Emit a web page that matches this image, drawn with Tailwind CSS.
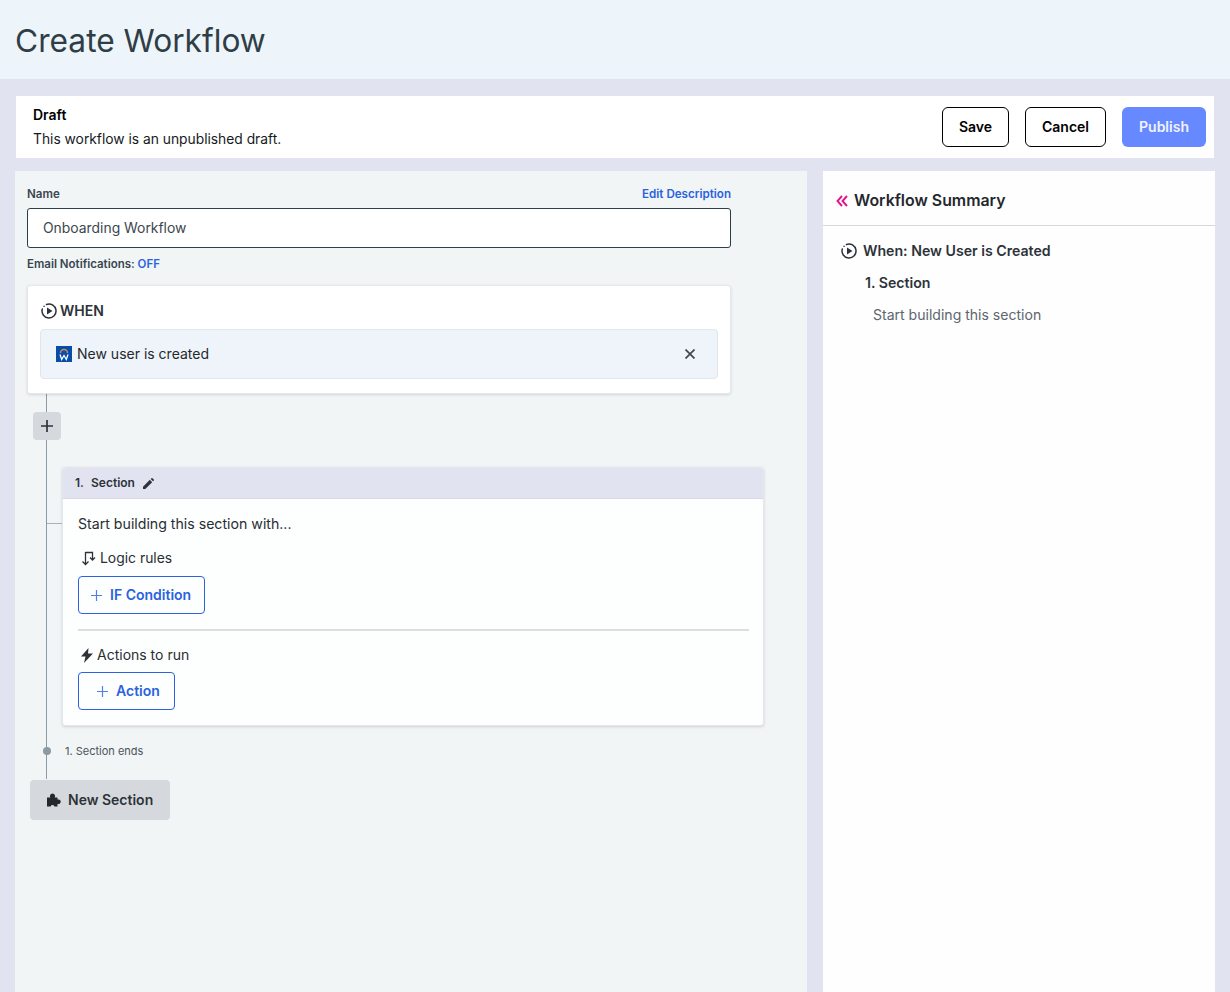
<!DOCTYPE html>
<html lang="en">
<head>
  <meta charset="UTF-8" />
  <title>Create Workflow</title>
  <script src="https://cdn.jsdelivr.net/npm/@tailwindcss/browser@4"></script>
</head>
<body class="bg-[#e1e3f0] font-['Inter',sans-serif] text-[#2a2e33] h-[992px] overflow-hidden">
  <!-- Header -->
  <header class="h-[79px] bg-[#eef5fa] pl-[15px] pt-[2px] flex items-center">
    <h1 class="text-[31.7px] leading-none text-[#2f3e46] font-normal">Create Workflow</h1>
  </header>

  <!-- Draft bar -->
  <div class="mt-[17px] ml-4 w-[1198px] h-[62px] bg-white pl-[17px] pr-2 flex items-center justify-between">
    <div class="-mt-px">
      <div class="text-sm leading-5 font-semibold text-black">Draft</div>
      <div class="text-[13.8px] leading-5 mt-1 text-[#16191c]">This workflow is an unpublished draft.</div>
    </div>
    <div class="flex gap-4">
      <button class="h-10 w-[67px] rounded-md border border-black bg-white text-sm font-semibold text-black">Save</button>
      <button class="h-10 w-[81px] rounded-md border border-black bg-white text-sm font-semibold text-black">Cancel</button>
      <button class="h-10 w-[84px] rounded-md bg-[#6789ff] text-sm font-semibold text-white/90">Publish</button>
    </div>
  </div>

  <main class="mt-[13px] ml-[15px] flex gap-4 h-[821px]">
    <!-- Builder -->
    <section class="w-[792px] bg-[#f1f5f6] pl-3 pt-4">
      <div class="w-[704px] flex justify-between items-center h-4 text-[11.6px] font-semibold">
        <span class="text-[#3a4650]">Name</span>
        <span class="text-[#2a62e0]">Edit Description</span>
      </div>
      <div class="w-[704px] h-10 mt-[5px] bg-white border border-[#2f3e46] rounded-[3px] flex items-center pl-[15px] text-[13.9px] text-[#3d464d]">Onboarding Workflow</div>
      <div class="mt-2 h-4 text-[11.5px] font-semibold text-[#3a4650]">Email Notifications: <span class="text-[#2a62e0]">OFF</span></div>

      <div class="relative mt-[14px]">
        <!-- timeline line -->
        <div class="absolute left-[19px] top-[100px] w-px h-[394px] bg-[#8b9aa3]"></div>

        <!-- When card -->
        <div class="relative -mt-px w-[704px] h-[109px] bg-white rounded-[3px] border border-[#e4e7ec] shadow-[0_1px_3px_rgba(0,0,0,0.12)] px-3 pt-[15px]">
          <div class="flex items-center gap-[3px] h-5 text-sm font-semibold text-[#2d3338]">
            <svg class="w-4 h-4 ml-px" viewBox="0 0 16 16" fill="none" stroke="#2d3338" stroke-width="1.5" stroke-linecap="round"><path d="M5.500 1.460A7 7 0 1 1 1.300 6"/><path d="M3 3.200l.1.1"/><path d="M6 4.500v7L11.500 8z" fill="#2d3338" stroke="none"/></svg>
            WHEN
          </div>
          <div class="mt-2 h-[50px] bg-[#eef4f9] border border-[#e1e6f0] rounded-[4px] flex items-center justify-between pl-[15px] pr-[22px]">
            <div class="flex items-center gap-[5px] text-sm text-[#25292d]">
              <svg class="w-4 h-4" viewBox="0 0 16 16"><rect width="16" height="16" fill="#0a4da8"/><path d="M4.500 7a3.500 3.500 0 0 1 7 0" fill="none" stroke="#c98a5c" stroke-width="1.500"/><path d="M4 8.500l1.700 5L8 9.500l2.300 4 1.700-5" fill="none" stroke="#fff" stroke-width="1.300"/></svg>
              New user is created
            </div>
            <svg class="w-[10px] h-[10px]" viewBox="0 0 10 10" stroke="#3f474d" stroke-width="1.700"><path d="M.5.500l9 9M9.500.500l-9 9"/></svg>
          </div>
        </div>

        <!-- Add step -->
        <div class="relative mt-[18px] ml-[6px] w-7 h-7 rounded-[4px] bg-[#d5d9de] flex items-center justify-center">
          <svg class="w-[14px] h-[14px]" viewBox="0 0 14 14" stroke="#2d3338" stroke-width="1.700"><path d="M7 1v12M1 7h12"/></svg>
        </div>

        <!-- Section card -->
        <div class="relative mt-[27px] ml-[35px] w-[702px] h-[259px] bg-[#fdfefe] rounded-[3px] border border-[#e3e6ea] shadow-[0_1px_3px_rgba(0,0,0,0.14)]">
          <div class="absolute -left-[16px] top-[55px] w-[15px] h-px bg-[#a9b2b8]"></div>
          <div class="h-[31px] bg-[#e1e3f0] rounded-t-[3px] border-b border-[#d6d9e6] flex items-center pl-3 text-xs font-semibold text-[#2d3338]">
            <span class="w-4">1.</span>
            <span>Section</span>
            <svg class="w-[11px] h-[11px] ml-2" viewBox="0 0 12 12" fill="#2d3338"><path d="M0 12V9.500L7.500 2 10 4.500 2.500 12zM8.400 1.100 9.300.200a.7.7 0 0 1 1 0l1.500 1.500a.7.7 0 0 1 0 1l-.9.900z"/></svg>
          </div>
          <div class="pl-[15px] pr-[15px] pt-[17px]">
            <div class="text-[14.15px] leading-4 text-[#2a2e33]">Start building this section with...</div>
            <div class="flex items-center gap-1 mt-[18px] h-4 pl-[3px] text-[13.9px] text-[#2a2e33]">
              <svg class="w-[15px] h-[15px]" viewBox="0 0 15 15" fill="none" stroke="#2d3338" stroke-width="1.300"><path d="M4.500 1v12.500M1.500 10.500l3 3 3-3"/><path d="M4.500 1.500H11.500V9M9 6.500 11.500 9 14 6.500"/></svg>
              Logic rules
            </div>
            <button class="mt-[10px] h-[38px] w-[127px] rounded-[4px] border border-[#2a62e0] flex items-center pl-3 gap-2 text-sm font-semibold text-[#2a62e0]">
              <svg class="w-[11px] h-[11px]" viewBox="0 0 11 11" stroke="#4f7fe8" stroke-width="1.200"><path d="M5.500 0v11M0 5.500h11"/></svg>
              IF Condition
            </button>
            <div class="mt-[15px] h-0.5 w-[671px] bg-[#dcdfe1]"></div>
            <div class="flex items-center gap-1 mt-4 h-4 pl-[3px] text-sm text-[#2a2e33]">
              <svg class="w-3 h-[15px]" viewBox="0 0 12 15" fill="#2d3338"><path d="M7.500 0 0 8.500h4.500L3 15l9-9.500H7z"/></svg>
              Actions to run
            </div>
            <button class="mt-[9px] h-[38px] w-[97px] rounded-[4px] border border-[#2a62e0] flex items-center pl-[18px] gap-2 text-sm font-semibold text-[#2a62e0]">
              <svg class="w-[11px] h-[11px]" viewBox="0 0 11 11" stroke="#4f7fe8" stroke-width="1.200"><path d="M5.500 0v11M0 5.500h11"/></svg>
              Action
            </button>
          </div>
        </div>

        <!-- Section end -->
        <div class="relative mt-[17px] flex items-center h-4 pl-4">
          <span class="w-2 h-2 rounded-full bg-[#8b9aa3]"></span>
          <span class="ml-[14px] text-[11px] text-[#4a545c]">1. Section ends</span>
        </div>

        <!-- New section -->
        <button class="relative mt-[21px] ml-[3px] w-[140px] h-10 rounded-[4px] bg-[#d5d9de] flex items-center pl-4 gap-[7px] text-sm font-semibold text-[#2d3338]">
          <svg class="w-[15px] h-[14px]" viewBox="0 0 15 14" fill="#23282c"><path d="M1 4.500H4.400A2.500 2.500 0 1 1 8.600 4.500H11.500V6.600A2.300 2.300 0 1 1 11.500 10.800V13.500H8.400A2 2 0 0 0 4.600 13.500H1z"/></svg>
          New Section
        </button>
      </div>
    </section>

    <!-- Summary -->
    <aside class="w-[392px] bg-[#fefeff]">
      <div class="h-[55px] pt-[6px] border-b border-[#d5d9de] flex items-center pl-[13px] gap-[6px] text-[15.9px] font-semibold text-[#24282c]">
        <svg class="w-3 h-3" viewBox="0 0 12 12" fill="none" stroke="#e0148c" stroke-width="1.900"><path d="M6 1 1.500 6 6 11M11 1 6.500 6 11 11"/></svg>
        Workflow Summary
      </div>
      <div class="pl-[18px] pt-[15px]">
        <div class="flex items-center gap-[6px] h-5 text-[14.15px] font-semibold text-[#2d3338]">
          <svg class="w-4 h-4" viewBox="0 0 16 16" fill="none" stroke="#2d3338" stroke-width="1.500" stroke-linecap="round"><path d="M5.500 1.460A7 7 0 1 1 1.300 6"/><path d="M3 3.200l.1.1"/><path d="M6 4.500v7L11.500 8z" fill="#2d3338" stroke="none"/></svg>
          When: New User is Created
        </div>
        <div class="mt-[11px] ml-[24px] h-5 text-[14.15px] font-semibold text-[#2d3338]">1. Section</div>
        <div class="mt-3 ml-[32px] h-5 text-[14.05px] text-[#5c666e]">Start building this section</div>
      </div>
    </aside>
  </main>
</body>
</html>
